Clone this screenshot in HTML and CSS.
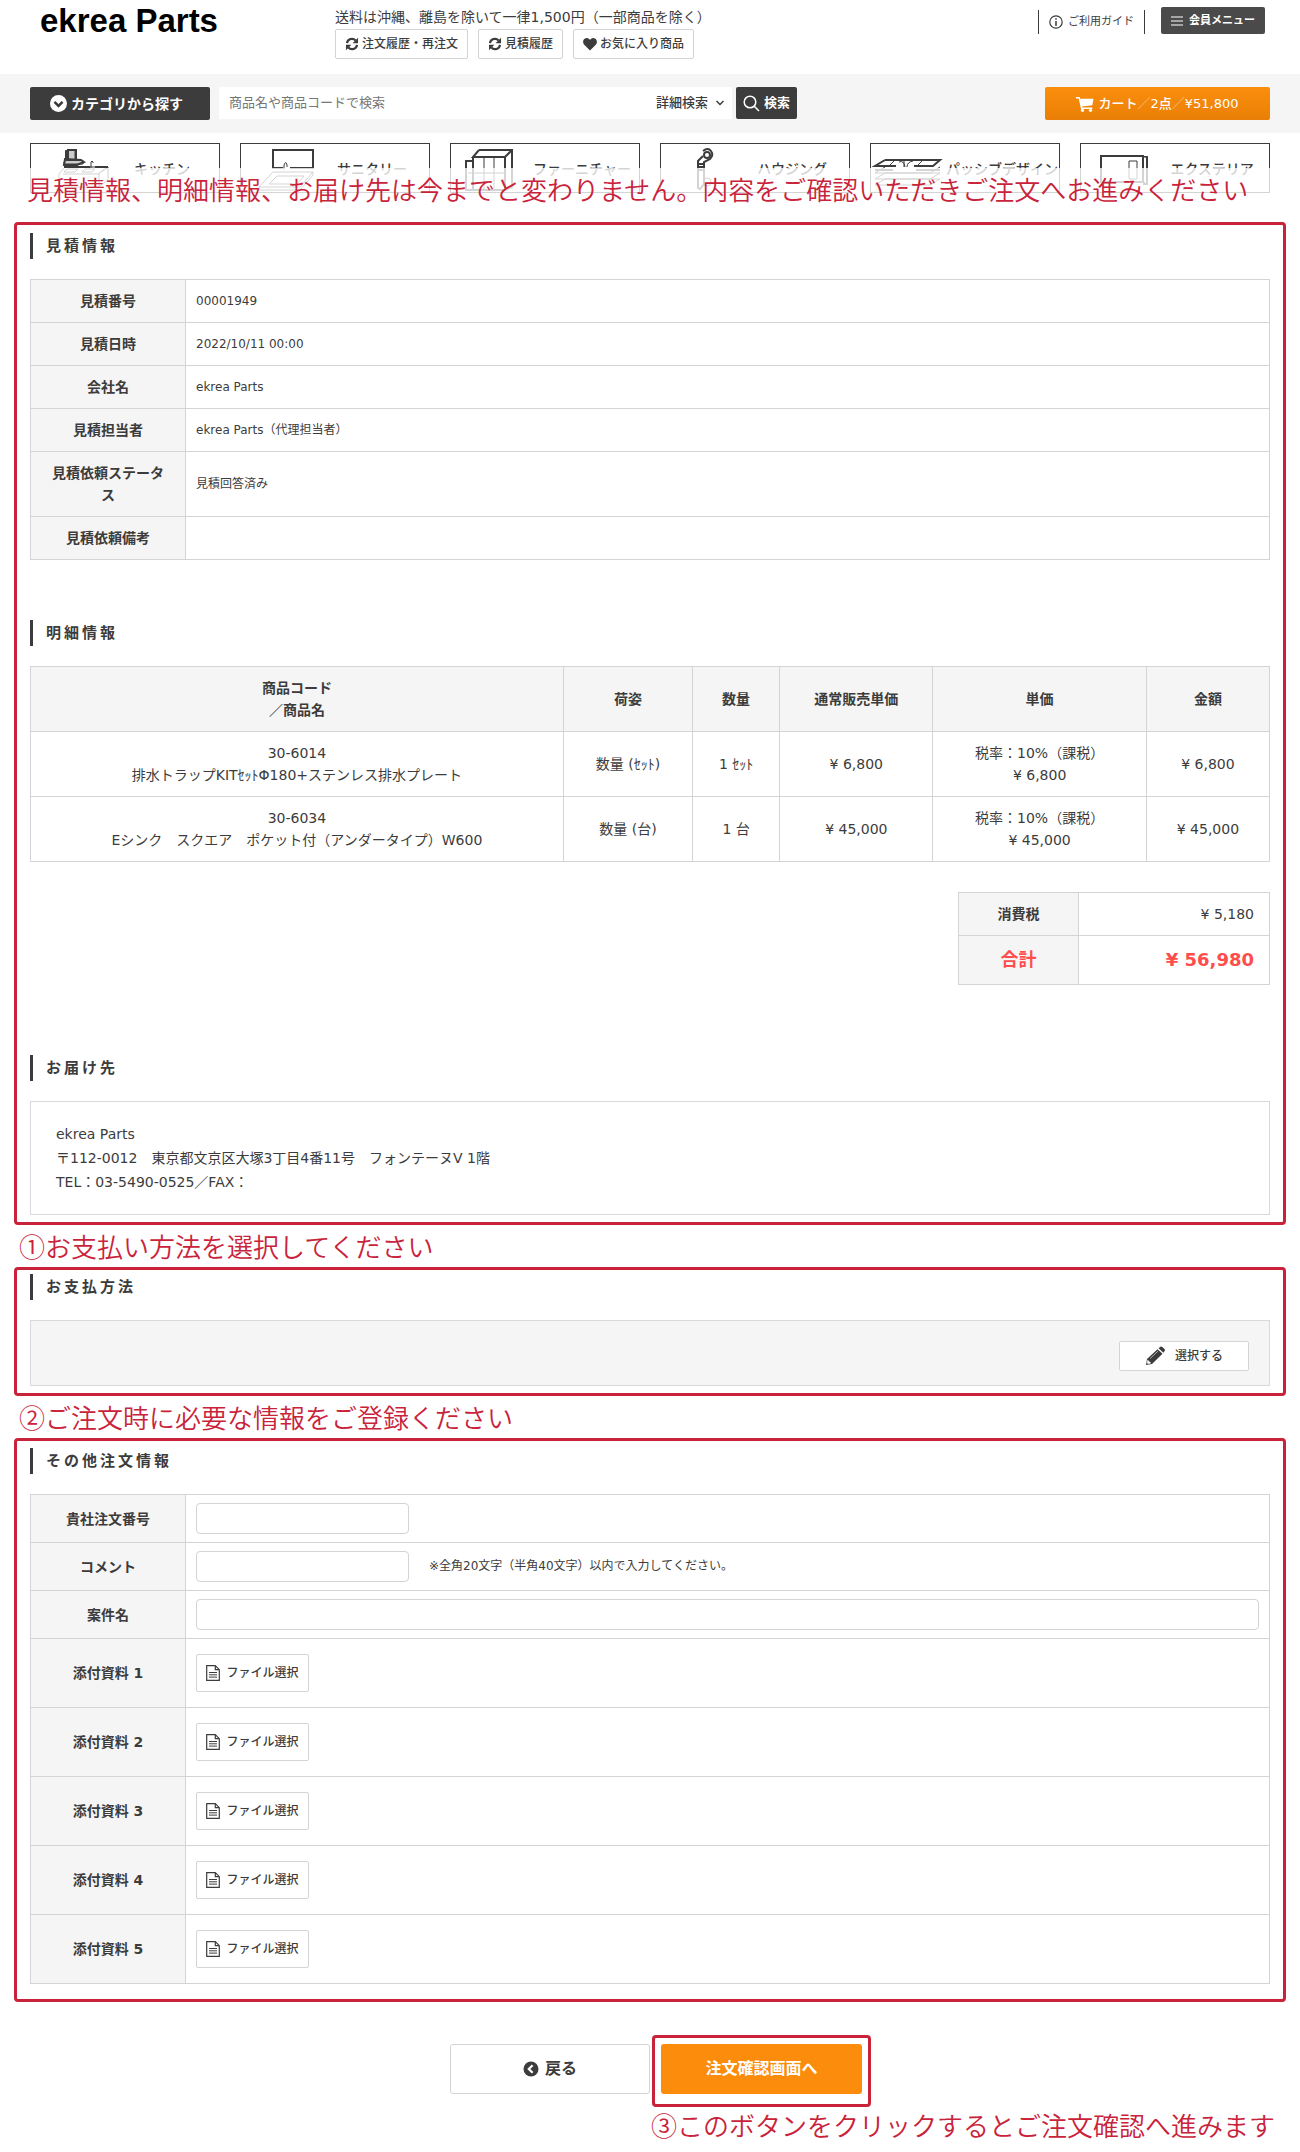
FILE: index.html
```html
<!DOCTYPE html>
<html lang="ja">
<head>
<meta charset="utf-8">
<meta name="viewport" content="width=device-width, initial-scale=1">
<title>ekrea Parts</title>
<link rel="stylesheet" href="styles.css">
</head>
<body>
<svg class="sprite" aria-hidden="true">
  <symbol id="i-refresh" viewBox="0 0 14 14"><path d="M2 6.2A5 5 0 0 1 10.6 3.4M12 7.8A5 5 0 0 1 3.4 10.6" fill="none" stroke="currentColor" stroke-width="2.2"/><path d="M13 .8v5.400H7.600zM1 13.200V7.800h5.400z" fill="currentColor"/></symbol>
  <symbol id="i-heart" viewBox="0 0 14 14"><path d="M7 13.400L1 7.400C-.8 5.200.1 1.200 3.600 1 5.300.9 6.400 2 7 3 7.600 2 8.700.9 10.400 1 13.900 1.200 14.800 5.200 13 7.400z" fill="currentColor"/></symbol>
  <symbol id="i-down" viewBox="0 0 16 16"><circle cx="8" cy="8" r="8" fill="currentColor"/><path d="M4.200 6.400L8 10.200l3.800-3.800" fill="none" stroke="#3c3c3c" stroke-width="2.400"/></symbol>
  <symbol id="i-back" viewBox="0 0 16 16"><circle cx="8" cy="8" r="7.500" fill="currentColor"/><path d="M9.600 4.200L5.800 8l3.800 3.800" fill="none" stroke="#fff" stroke-width="2.200"/></symbol>
  <symbol id="i-chevron" viewBox="0 0 10 10"><path d="M1.500 3L5 6.500 8.500 3" fill="none" stroke="currentColor" stroke-width="1.500"/></symbol>
  <symbol id="i-search" viewBox="0 0 17 17"><circle cx="7" cy="7" r="5.800" fill="none" stroke="currentColor" stroke-width="1.500"/><path d="M11.200 11.200L16 16" stroke="currentColor" stroke-width="1.500"/></symbol>
  <symbol id="i-cart" viewBox="0 0 18 16"><path d="M0 1h3.600l.5 1.800H17.500L16.300 9.200 6 10.400l.3 1.200h10v1.400H5L2.700 2.400H0z" fill="currentColor"/><circle cx="6.500" cy="14.300" r="1.600" fill="currentColor"/><circle cx="14.500" cy="14.300" r="1.600" fill="currentColor"/></symbol>
  <symbol id="i-info" viewBox="0 0 14 14"><circle cx="7" cy="7" r="6.200" fill="none" stroke="currentColor" stroke-width="1.200"/><path d="M7 3.200v1.500M7 6v5" stroke="currentColor" stroke-width="1.500"/></symbol>
  <symbol id="i-menu" viewBox="0 0 12 10"><path d="M0 1h12M0 5h12M0 9h12" stroke="currentColor" stroke-width="1.200"/></symbol>
  <symbol id="i-pencil" viewBox="0 0 20 20"><path d="M1 19l1-6L12.500 3.200l5 4.600L7 18zM13.600 2.300L15.300.8q1-.7 2 .1l2.200 2q.9 1 .1 2L18.400 6.700z" fill="currentColor"/><path d="M2.700 14.200l3 2.800-2.600.7-.9-.9zM5 12.600l8-7.500" fill="#fff" stroke="#fff" stroke-width=".6"/></symbol>
  <symbol id="i-file" viewBox="0 0 14 16"><path d="M.7.700h8.600l4 4v10.600H.7zM9.300.700v4h4" fill="none" stroke="currentColor" stroke-width="1.200"/><path d="M3 7.500h8M3 9.800h8M3 12.100h8" stroke="currentColor" stroke-width="1"/></symbol>
</svg>

<header class="header">
  <a class="logo" href="#">ekrea Parts</a>
  <div class="header-mid">
    <p class="shipping">送料は沖縄、離島を除いて一律1,500円（一部商品を除く）</p>
    <div class="quick">
      <a class="quick-link" href="#"><svg><use href="#i-refresh"/></svg>注文履歴・再注文</a>
      <a class="quick-link" href="#"><svg><use href="#i-refresh"/></svg>見積履歴</a>
      <a class="quick-link" href="#"><svg><use href="#i-heart"/></svg>お気に入り商品</a>
    </div>
  </div>
  <div class="header-right">
    <a class="guide" href="#"><svg><use href="#i-info"/></svg>ご利用ガイド</a>
    <button class="member" type="button"><svg><use href="#i-menu"/></svg>会員メニュー</button>
  </div>
</header>

<div class="toolbar">
  <button class="category-button" type="button"><svg><use href="#i-down"/></svg>カテゴリから探す</button>
  <form class="search">
    <div class="search-field">
      <input type="text" aria-label="商品検索" placeholder="商品名や商品コードで検索">
      <button class="detail" type="button">詳細検索<svg><use href="#i-chevron"/></svg></button>
    </div>
    <button class="search-button" type="button"><svg><use href="#i-search"/></svg>検索</button>
  </form>
  <a class="cart" href="#"><svg><use href="#i-cart"/></svg><span>カート<i>／</i>2点<i>／</i>¥51,800</span></a>
</div>

<nav class="categories">
  <a class="category" href="#">
    <svg viewBox="0 0 74 47"><path d="M36 5h8v9l8 2v3H33v-2l5-3-2-1z" fill="#ccc"/><path d="M37 5h8v10h-8zM37 5l-2 1v9M34 14l16 1 3 2-7 3H33z" class="thick"/><path d="M60 23v-6q1-2 2 0v1M32 29h36v13H28V29L34 22h43L67 29M67 29l10-7v13l-10 7M36 24h11l-3 3H33zM54 24h10l-3 3H51z"/><path d="M33 22h26M64 22h13" class="thick"/></svg>
    <span>キッチン</span></a>
  <a class="category" href="#">
    <svg viewBox="0 0 74 47"><path d="M42 23H32V5h40v18H49" class="thick"/><path d="M43 25v-5q2-5 3 0v2M32 27h40L59 42H18zM36 31h27l-7 8H28zM18 42v3h41l13-15v-3"/></svg>
    <span>サニタリー</span></a>
  <a class="category" href="#">
    <svg viewBox="0 0 74 47"><path d="M28 5h33v37l-7 3V12H22L28 5M22 12v33h32M22 16h-7v29h7M54 12l7-7" class="thick"/><path d="M33 12v33M43 12v33M22 28h32M17 28h5"/></svg>
    <span>ファーニチャー</span></a>
  <a class="category" href="#">
    <svg viewBox="0 0 74 47"><circle cx="46" cy="10" r="3" class="thick"/><path d="M42 6q5-4 8 0t-1 8l-6 3v8h-6v-9l5-5M37 25v18l2 1 4-5V25M37 19h6M37 22h6" class="thick"/><circle cx="46" cy="37" r="4"/></svg>
    <span>ハウジング</span></a>
  <a class="category" href="#">
    <svg viewBox="0 0 74 47"><path d="M14 15h55l-7 6H43M25 21H4l10-6M4 25h18M45 25h24" class="thick"/><path d="M14 28h55l-10 6H4zM14 34h55l-10 6H4zM24 15l-6 6M52 15l-6 6M28 17q5-2 6 5M42 16q-6 1-6 6M33 15v7M14 22L4 28h55l10-6"/></svg>
    <span>パッシブデザイン</span></a>
  <a class="category" href="#">
    <svg viewBox="0 0 74 47"><path d="M20 11h42v26H20zM62 11l4 1v27h-3v-2" class="thick"/><path d="M48 16h8v18h-8z"/></svg>
    <span>エクステリア</span></a>
</nav>

<p class="note note-top">見積情報、明細情報、お届け先は今までと変わりません。内容をご確認いただきご注文へお進みください</p>

<main>
  <div class="frame">
    <section>
      <h2>見積情報</h2>
      <table class="info">
        <tr><th>見積番号</th><td>00001949</td></tr>
        <tr><th>見積日時</th><td>2022/10/11 00:00</td></tr>
        <tr><th>会社名</th><td>ekrea Parts</td></tr>
        <tr><th>見積担当者</th><td>ekrea Parts（代理担当者）</td></tr>
        <tr><th>見積依頼ステータス</th><td>見積回答済み</td></tr>
        <tr><th>見積依頼備考</th><td></td></tr>
      </table>
    </section>
    <section>
      <h2>明細情報</h2>
      <table class="items">
        <colgroup><col class="c-name"><col class="c-pack"><col class="c-qty"><col class="c-list"><col class="c-unit"><col class="c-sum"></colgroup>
        <thead><tr><th>商品コード<br>／商品名</th><th>荷姿</th><th>数量</th><th>通常販売単価</th><th>単価</th><th>金額</th></tr></thead>
        <tbody>
          <tr><td>30-6014<br>排水トラップKITｾｯﾄΦ180+ステンレス排水プレート</td><td>数量 (ｾｯﾄ)</td><td>1 ｾｯﾄ</td><td>¥ 6,800</td><td>税率：10%（課税）<br>¥ 6,800</td><td>¥ 6,800</td></tr>
          <tr><td>30-6034<br>Eシンク　スクエア　ポケット付（アンダータイプ）W600</td><td>数量 (台)</td><td>1 台</td><td>¥ 45,000</td><td>税率：10%（課税）<br>¥ 45,000</td><td>¥ 45,000</td></tr>
        </tbody>
      </table>
      <table class="totals">
        <tr><th>消費税</th><td>¥ 5,180</td></tr>
        <tr class="grand"><th>合計</th><td>¥ 56,980</td></tr>
      </table>
    </section>
    <section>
      <h2>お届け先</h2>
      <address class="address">ekrea Parts<br>〒112-0012　東京都文京区大塚3丁目4番11号　フォンテーヌV 1階<br>TEL：03-5490-0525／FAX：</address>
    </section>
  </div>

  <p class="note">①お支払い方法を選択してください</p>
  <section class="frame frame-pay">
    <h2>お支払方法</h2>
    <div class="payment"><button class="select-button" type="button"><svg><use href="#i-pencil"/></svg>選択する</button></div>
  </section>

  <p class="note">②ご注文時に必要な情報をご登録ください</p>
  <section class="frame frame-other">
    <h2>その他注文情報</h2>
    <table class="info form">
      <tr><th><label for="order-no">貴社注文番号</label></th><td><input id="order-no" type="text"></td></tr>
      <tr><th><label for="comment">コメント</label></th><td><input id="comment" type="text"><span class="hint">※全角20文字（半角40文字）以内で入力してください。</span></td></tr>
      <tr><th><label for="project">案件名</label></th><td><input id="project" class="wide" type="text"></td></tr>
      <tr class="file"><th><label for="file1">添付資料 1</label></th><td><button id="file1" type="button"><svg><use href="#i-file"/></svg>ファイル選択</button></td></tr>
      <tr class="file"><th><label for="file2">添付資料 2</label></th><td><button id="file2" type="button"><svg><use href="#i-file"/></svg>ファイル選択</button></td></tr>
      <tr class="file"><th><label for="file3">添付資料 3</label></th><td><button id="file3" type="button"><svg><use href="#i-file"/></svg>ファイル選択</button></td></tr>
      <tr class="file"><th><label for="file4">添付資料 4</label></th><td><button id="file4" type="button"><svg><use href="#i-file"/></svg>ファイル選択</button></td></tr>
      <tr class="file"><th><label for="file5">添付資料 5</label></th><td><button id="file5" type="button"><svg><use href="#i-file"/></svg>ファイル選択</button></td></tr>
    </table>
  </section>

  <div class="actions">
    <button class="back" type="button"><svg><use href="#i-back"/></svg>戻る</button>
    <div class="next-frame"><button class="next" type="button">注文確認画面へ</button></div>
  </div>
  <p class="note note-last">③このボタンをクリックするとご注文確認へ進みます</p>
</main>
</body>
</html>
```
FILE: styles.css
```css
* { box-sizing: border-box; }
body {
  margin: 0;
  background: #fff;
  color: #3c3c3c;
  font: 14px/22px "DejaVu Sans", "Noto Sans CJK JP", sans-serif;
}
p, h2 { margin: 0; }
a { color: inherit; text-decoration: none; }
button, input { font: inherit; color: inherit; margin: 0; }
button { cursor: pointer; white-space: nowrap; }
svg { flex: none; }
.sprite { display: none; }

/* Header */
.header { display: flex; height: 74px; padding: 0 35px 0 40px; }
.logo { width: 295px; padding-top: 4px; font: bold 33px/34px "Liberation Sans", sans-serif; color: #000; }
.header-mid { flex: 1; padding-top: 6px; }
.quick { display: flex; gap: 10px; margin-top: 1px; }
.quick-link {
  display: flex; align-items: center; gap: 3px; height: 30px; padding: 0 9px;
  border: 1px solid #d4d4d4; border-radius: 2px; font-size: 12px; font-weight: 500;
}
.quick-link svg { width: 14px; height: 14px; }
.header-right { display: flex; align-items: flex-start; gap: 16px; padding-top: 7px; font-size: 11px; }
.guide {
  display: flex; align-items: center; gap: 5px; height: 24px; margin-top: 3px; padding: 0 10px;
  border: solid #3c3c3c; border-width: 0 1px;
}
.guide svg { width: 14px; height: 14px; }
.member {
  display: flex; align-items: center; gap: 6px; height: 27px; padding: 0 10px;
  border: 0; border-radius: 2px; background: #4a4a4a; color: #fff; font-weight: 700;
}
.member svg { width: 12px; height: 10px; }

/* Search toolbar */
.toolbar { display: flex; align-items: flex-start; height: 59px; padding: 13px 30px 0; background: #f5f5f5; }
.category-button {
  display: flex; align-items: center; gap: 4px; width: 180px; height: 33px; padding: 0 20px;
  border: 0; border-radius: 2px; background: #3c3c3c; color: #fff; font-weight: 700;
}
.category-button svg { width: 17px; height: 17px; }
.search { display: flex; gap: 4px; margin-left: 9px; font-size: 13px; }
.search-field { display: flex; width: 513px; height: 32px; background: #fff; }
.search-field input { flex: 1; min-width: 0; padding: 0 10px; border: 0; background: none; }
.search-field input::placeholder { color: #777; }
.detail { display: flex; align-items: center; gap: 7px; padding: 0 7px; border: 0; background: none; font-weight: 500; }
.detail svg { width: 10px; height: 10px; }
.search-button {
  display: flex; align-items: center; justify-content: center; gap: 4px; width: 61px; height: 32px; padding: 0;
  border: 0; border-radius: 2px; background: #3c3c3c; color: #fff; font-weight: 700;
}
.search-button svg { width: 17px; height: 17px; }
.cart {
  display: flex; align-items: center; justify-content: center; gap: 4px; width: 225px; height: 33px; margin-left: auto;
  border-radius: 2px; background: linear-gradient(#fb8e0c, #e97f06); color: #fff; font-size: 13px; font-weight: 500;
}
.cart svg { width: 18px; height: 16px; }
.cart i { font-style: normal; opacity: .4; }

/* Category navigation */
.categories { display: grid; grid-template-columns: repeat(6, minmax(0, 1fr)); gap: 20px; padding: 10px 30px 0; }
.category {
  display: grid; grid-template-columns: 74px 1fr; align-items: center; height: 50px;
  border: 1px solid #3c3c3c; font-weight: 500; text-align: center; white-space: nowrap;
}
.category svg { width: 74px; height: 47px; overflow: visible; fill: none; stroke: #3c3c3c; stroke-width: 1; }
.category span { padding-top: 2px; }
.category .thick { stroke-width: 2; }

/* Red guidance notes and frames */
.note { padding: 0 5px; color: #c9233b; font: 350 26px/42px "Noto Sans CJK JP", sans-serif; }
.note-top { position: relative; height: 54px; margin-top: -25px; padding: 0 27px; background: rgba(255, 255, 255, .78); white-space: nowrap; }
main { padding: 0 14px 10px; }
.frame { display: grid; gap: 60px; padding: 8px 13px 7px; border: 3px solid #c9233b; border-radius: 4px; }
.frame-pay { display: block; padding-top: 4px; }
.frame-other { display: block; padding: 7px 13px 15px; }
h2 {
  height: 26px; margin-bottom: 20px; padding-left: 13px; border-left: 3px solid #3c3c3c;
  font-size: 15px; line-height: 26px; font-weight: 700; letter-spacing: 3px;
}

/* Tables */
table { width: 100%; border-collapse: collapse; table-layout: fixed; }
th, td { padding: 10px; border: 1px solid #d4d4d4; }
th { background: #f5f5f5; font-weight: 700; }
.info th { width: 155px; padding: 10px 20px; }
.info td { font-size: 12px; }
.items td { text-align: center; }
.c-name { width: 43%; }
.c-pack { width: 129px; }
.c-qty { width: 87px; }
.c-list { width: 153px; }
.c-unit { width: 213px; }
.c-sum { width: 123px; }
.totals { width: 312px; margin: 30px 0 10px auto; }
.totals th { width: 120px; }
.totals td { padding-right: 15px; text-align: right; }
.grand { color: #ff4d4d; font-size: 18px; line-height: 28px; }
.grand td { font-weight: 700; }

.address { padding: 20px 25px; border: 1px solid #d9d9d9; line-height: 24px; font-style: normal; }
.payment { display: flex; justify-content: flex-end; padding: 20px 20px 14px; border: 1px solid #d9d9d9; background: #f5f5f5; }
.select-button {
  display: flex; align-items: center; justify-content: center; gap: 10px; width: 130px; height: 30px; padding: 0;
  border: 1px solid #d4d4d4; border-radius: 2px; background: #fff; font-size: 12px; font-weight: 500;
}
.select-button svg { width: 20px; height: 20px; }

.form td { padding: 8px 10px; }
.form input {
  display: inline-block; width: 213px; height: 31px; padding: 0 8px;
  border: 1px solid #d4d4d4; border-radius: 4px; background: #fff; vertical-align: middle;
}
.form .wide { width: 100%; }
.hint { margin-left: 20px; }
.form .file td { padding: 15px 10px; }
.file button {
  display: flex; align-items: center; justify-content: center; gap: 6px; width: 113px; height: 38px; padding: 0;
  border: 1px solid #d4d4d4; border-radius: 2px; background: #fff; font-weight: 500;
}
.file svg { width: 14px; height: 16px; }

/* Page actions */
.actions { display: flex; justify-content: center; gap: 2px; margin-top: 33px; padding-left: 21px; }
.back, .next { display: flex; align-items: center; justify-content: center; height: 50px; padding: 0; border-radius: 3px; font-size: 16px; font-weight: 700; }
.back { gap: 6px; width: 200px; margin-top: 9px; border: 1px solid #d4d4d4; background: #fff; }
.back svg { width: 16px; height: 16px; }
.next-frame { width: 219px; padding: 6px 6px 10px; border: 3px solid #c9233b; border-radius: 4px; }
.next { width: 100%; border: 0; background: #fb8c0c; color: #fff; }
.note-last { padding: 0 11px; text-align: right; line-height: 36px; }
```
